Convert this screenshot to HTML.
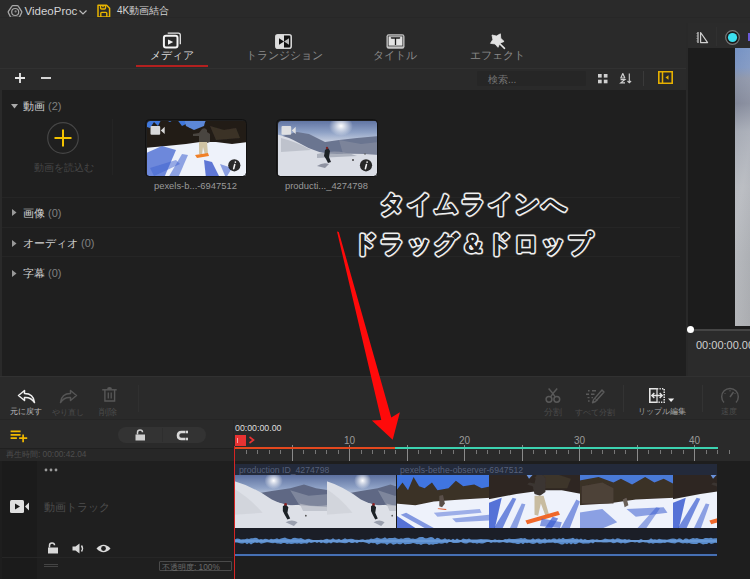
<!DOCTYPE html>
<html><head><meta charset="utf-8">
<style>
*{margin:0;padding:0;box-sizing:border-box}
html,body{width:750px;height:579px;overflow:hidden;background:#2a2a2a;font-family:"Liberation Sans",sans-serif;color:#ddd}
.a{position:absolute}
.t{position:absolute;white-space:nowrap;line-height:1}
svg{position:absolute;overflow:visible}
/* snowboard forest frame */
.fb{position:absolute;overflow:hidden;
background:
 radial-gradient(ellipse 30% 20% at 45% 72%, rgba(60,90,210,.9), rgba(60,90,210,0) 100%),
 linear-gradient(180deg,#4a6fc8 0%,#3a3a30 8%,#2e2a22 35%,#6a6a70 42%,#e8ecf8 55%,#c8d4f4 70%,#4e70d8 88%,#3a5ad0 100%)}
.fs{position:absolute;overflow:hidden;
background:
 radial-gradient(ellipse 14% 22% at 50% 8%, rgba(255,255,255,.95), rgba(255,255,255,0) 100%),
 linear-gradient(180deg,#8ea2c6 0%,#aab8d4 20%,#8a98b4 32%,#d6dce8 45%,#eef0f6 65%,#dfe3ec 85%,#c6ccd8 100%)}
</style></head><body>

<svg style="left:0;top:0;width:0;height:0" width="0" height="0">
 <defs>
  <radialGradient id="sun" cx="0.5" cy="0.5" r="0.5"><stop offset="0" stop-color="#fff" stop-opacity="1"/><stop offset="1" stop-color="#fff" stop-opacity="0"/></radialGradient>
  <linearGradient id="skyA" x1="0" y1="0" x2="0" y2="1"><stop offset="0" stop-color="#55699a"/><stop offset=".6" stop-color="#8fa2c6"/><stop offset="1" stop-color="#c8d0e0"/></linearGradient>
  <linearGradient id="snowA" x1="0" y1="0" x2="0" y2="1"><stop offset="0" stop-color="#e4e7ee"/><stop offset="1" stop-color="#cfd3dc"/></linearGradient>
  <symbol id="skier" viewBox="0 0 100 56" preserveAspectRatio="none">
   <g filter="url(#soft)">
   <rect x="-2" y="-2" width="104" height="60" fill="#dfe2e8"/>
   <rect x="-2" y="-2" width="104" height="26" fill="url(#skyA)"/>
   <ellipse cx="42" cy="6" rx="10" ry="9" fill="url(#sun)"/>
   <path d="M20 20 L40 17 L60 14 L75 10 L88 14 L102 16 V30 L60 32 L30 26 Z" fill="#5e6884"/>
   <path d="M60 16 L80 22 L102 20 V34 L70 32 Z" fill="#7e869c"/>
   <path d="M-2 6 Q20 12 40 26 Q60 36 102 36 V58 H-2 Z" fill="#dde0e7"/>
   <path d="M-2 14 Q16 24 30 40 L-2 42 Z" fill="#cfd2da" opacity=".8"/>
   <path d="M70 30 Q85 34 100 32 V38 H74 Z" fill="#b6bac4" opacity=".7"/>
   <path d="M52 33 L55 31 L58 34 L57 40 L60 46 L57 47 L54 42 L52 38 Z" fill="#1e2028"/>
   <circle cx="55" cy="31" r="1.5" fill="#8a2020"/>
   <path d="M55 50 Q62 46 68 50 L64 54 Z" fill="#8a90a0" opacity=".8"/>
   <circle cx="77" cy="43" r="0.9" fill="#444"/>
   </g>
  </symbol>
  <filter id="soft" x="-5%" y="-5%" width="110%" height="110%"><feGaussianBlur stdDeviation="0.7"/></filter>
  <linearGradient id="snowB" x1="0" y1="0" x2="0" y2="1"><stop offset="0" stop-color="#f2f4fa"/><stop offset="1" stop-color="#dfe6f8"/></linearGradient>
  <symbol id="board" viewBox="0 0 100 56" preserveAspectRatio="none">
   <g filter="url(#soft)">
   <rect x="-2" y="-2" width="104" height="60" fill="#eef2fa"/>
   <rect x="-2" y="-2" width="104" height="12" fill="#3f78dc"/>
   <path d="M-2 28 V6 L4 8 L8 2 L12 6 L16 -2 L24 2 L30 -2 L36 6 L40 4 L44 8 L50 2 L56 6 L62 -2 H102 V22 L86 24 L70 22 L54 22 L40 24 L20 26 Z" fill="#241e18"/>
   <path d="M38 -2 L60 -2 L58 6 L48 10 L40 6 Z" fill="#5c88d8"/>
   <path d="M64 6 L78 10 L90 8 L94 18 L70 20 Z" fill="#3a3228"/>
   <path d="M-2 34 L16 26 L30 30 L18 58 H-2 Z" fill="#4264d0" opacity=".75"/>
   <path d="M22 58 L36 34 L42 35 L32 58 Z" fill="#3e60d0" opacity=".55"/>
   <path d="M4 48 L30 40 L34 44 L8 56 Z" fill="#3e60d0" opacity=".5"/>
   <path d="M58 40 L66 42 L74 58 H60 Z" fill="#3a58cc" opacity=".8"/>
   <path d="M74 44 L86 48 L80 58 Z" fill="#4a68d0" opacity=".6"/>
   <path d="M56 9 Q59 7 61 10 L61 12 L64 14 L64 22 L61 23 L53 22 L53 16 L47 16 L47 14 L53 13 Z" fill="#4a4440"/>
   <path d="M53 22 L61 22 L62 34 L59 35 L57 27 L56 35 L53 34 Z" fill="#d0c4a4"/>
   <path d="M49 35 L62 33 L63 36 L51 38 Z" fill="#f08028"/>
   </g>
  </symbol>
  <symbol id="board2" viewBox="0 0 100 56" preserveAspectRatio="none">
   <g filter="url(#soft)">
   <rect x="-2" y="-2" width="104" height="60" fill="#eef2fb"/>
   <rect x="-2" y="-2" width="104" height="8" fill="#6a92dc"/>
   <path d="M-2 26 V-2 H40 L44 4 L50 -2 H102 V20 L80 16 L60 16 L30 20 Z" fill="#2e2822"/>
   <path d="M50 2 L70 -2 L90 4 L86 14 L60 14 Z" fill="#3c342c"/>
   <path d="M-2 30 L14 24 L6 58 H-2 Z" fill="#3a5cd0" opacity=".85"/>
   <path d="M4 58 L26 24 L30 25 L14 58 Z" fill="#3a5cd0" opacity=".7"/>
   <path d="M22 58 L36 30 L40 31 L30 58 Z" fill="#3a5cd0" opacity=".55"/>
   <path d="M60 58 L70 44 L76 46 L68 58 Z" fill="#3a5cd0" opacity=".7"/>
   <path d="M78 58 L96 26 L100 28 L88 58 Z" fill="#3a5cd0" opacity=".6"/>
   <path d="M52 0 Q58 -2 62 3 L62 18 L56 22 L50 20 L48 12 L42 10 L44 8 L50 9 Z" fill="#3a3430"/>
   <path d="M50 22 L60 22 L66 42 L62 43 L57 30 L54 43 L50 42 Z" fill="#c8bca0"/>
   <path d="M40 48 L76 38 L78 42 L42 52 Z" fill="#f0682a"/>
   <path d="M58 46 L80 50 L78 56 L56 54 Z" fill="#3a5cd0" opacity=".6"/>
   </g>
  </symbol>
  <symbol id="wide" viewBox="0 0 100 56" preserveAspectRatio="none">
   <g filter="url(#soft)">
   <rect x="-2" y="-2" width="104" height="60" fill="#eef2fb"/>
   <rect x="-2" y="-2" width="104" height="22" fill="#3f74e0"/>
   <path d="M-2 30 V18 L6 8 L12 16 L18 2 L24 12 L30 14 L38 8 L44 16 L56 14 L64 6 L72 12 L84 10 L92 14 L102 12 V24 L70 26 L40 28 L20 32 Z" fill="#3a3026"/>
   <path d="M-2 42 L20 56 H-2 Z" fill="#3a5cd0" opacity=".85"/>
   <path d="M10 40 L40 56 H30 L4 42 Z" fill="#3a5cd0" opacity=".6"/>
   <path d="M40 40 L90 36 L92 40 L44 44 Z" fill="#3a5cd0" opacity=".45"/>
   <path d="M60 46 L100 42 V48 L64 50 Z" fill="#3a5cd0" opacity=".5"/>
   <path d="M46 22 L50 21 L52 30 L49 34 L46 33 Z" fill="#5a5048"/>
   <path d="M45 35 L54 36 L53 37 L44 36 Z" fill="#e05a30"/>
   </g>
  </symbol>
  <symbol id="house" viewBox="0 0 100 56" preserveAspectRatio="none">
   <g filter="url(#soft)">
   <rect x="-2" y="-2" width="104" height="60" fill="#eef2fb"/>
   <rect x="-2" y="-2" width="104" height="20" fill="#4a7ad8"/>
   <path d="M-2 32 V6 L20 2 L36 8 L44 4 L56 10 L70 2 L80 8 L90 4 L102 10 V24 L60 26 L30 30 Z" fill="#3a3028"/>
   <path d="M2 12 L24 8 L36 14 V30 H2 Z" fill="#4e4238"/>
   <path d="M-2 40 L24 36 L40 50 L20 58 H-2 Z" fill="#3a5cd0" opacity=".55"/>
   <path d="M50 36 L90 34 L94 40 L60 44 Z" fill="#3a5cd0" opacity=".55"/>
   <path d="M60 58 L82 34 L86 35 L70 58 Z" fill="#3a5cd0" opacity=".5"/>
   <path d="M46 26 L50 24 L52 32 L48 34 Z" fill="#6a6058"/>
   </g>
  </symbol>
  <symbol id="skier2" viewBox="0 0 100 56" preserveAspectRatio="none">
   <g filter="url(#soft)">
   <rect x="-2" y="-2" width="104" height="60" fill="#dcdfe6"/>
   <rect x="-2" y="-2" width="104" height="24" fill="url(#skyA)"/>
   <ellipse cx="64" cy="6" rx="12" ry="10" fill="url(#sun)"/>
   <path d="M-2 18 L20 12 L32 14 L48 22 L62 20 L80 18 L102 16 V34 H-2 Z" fill="#6a7490"/>
   <path d="M62 20 L84 24 L102 22 V36 L66 34 Z" fill="#7c849a"/>
   <path d="M-2 14 Q10 16 24 24 Q40 34 60 34 Q80 33 102 35 V58 H-2 Z" fill="#dadde5"/>
   <path d="M4 18 Q20 22 34 30 L4 32 Z" fill="#b6bbc6" opacity=".8"/>
   <path d="M40 34 Q60 28 80 36 L40 38 Z" fill="#9aa0ae" opacity=".7"/>
   <path d="M48 30 L51 28 L53 31 L52 37 L54 42 L51 43 L49 39 L47 36 Z" fill="#1e2028"/>
   <circle cx="50" cy="28" r="1.2" fill="#7a2424"/>
   <path d="M40 46 Q46 42 52 44 L48 48 Z" fill="#7a8090" opacity=".8"/>
   <circle cx="76" cy="40" r="1" fill="#444"/>
   <circle cx="88" cy="34" r="0.8" fill="#555"/>
   </g>
  </symbol>
 </defs>
</svg>
<!-- ================= TITLE BAR ================= -->
<svg style="left:7px;top:4px" width="16" height="15" viewBox="0 0 16 15">
 <path d="M6 1.6 H10.2 Q11 1.6 11.4 2.3 L14.6 7.3 Q15 8 14.6 8.7 L12.6 12.7 Q12.2 13.4 11.4 13.4 H4.6 Q3.8 13.4 3.4 12.7 L1.4 8.7 Q1 8 1.4 7.3 L4.8 2.3 Q5.2 1.6 6 1.6 Z" fill="none" stroke="#a8a8a8" stroke-width="1.3" stroke-linejoin="round"/>
 <circle cx="8.2" cy="8" r="3.5" fill="none" stroke="#a8a8a8" stroke-width="1.2"/>
 <circle cx="8.6" cy="7.4" r="1.1" fill="#888"/>
</svg>
<div class="t" style="left:24.5px;top:6px;font-size:11.5px;color:#d4d4d4">VideoProc</div>
<svg style="left:79px;top:10px" width="8" height="5" viewBox="0 0 8 5"><path d="M0.5 0.5 L4 4 L7.5 0.5" fill="none" stroke="#bbb" stroke-width="1.2"/></svg>
<svg style="left:97px;top:4px" width="14" height="14" viewBox="0 0 14 14">
 <path d="M1 1.2 H9.6 L12.6 4.2 V13 H1 Z" fill="none" stroke="#e8b400" stroke-width="1.5" stroke-linejoin="round"/>
 <path d="M3.6 1.2 V3.9 Q3.6 5 4.7 5 H7.4 Q8.5 5 8.5 3.9 V1.2" fill="none" stroke="#e8b400" stroke-width="1.4"/>
 <circle cx="6" cy="2.6" r="0.8" fill="#e8b400"/>
 <path d="M3.8 13 V9.3 Q3.8 8.4 4.7 8.4 H8.9 Q9.8 8.4 9.8 9.3 V13" fill="none" stroke="#e8b400" stroke-width="1.4"/>
</svg>
<div class="t" style="left:117px;top:6px;font-size:10px;color:#d4d4d4">4K動画結合</div>

<div class="a" style="left:0;top:17px;width:750px;height:1px;background:#272727"></div>
<!-- ================= TABS ================= -->
<!-- media icon -->
<svg style="left:162px;top:31px" width="20" height="18" viewBox="0 0 20 18">
 <path d="M5.7 2.2 H16.3 Q18.3 2.2 18.3 4.2 V13.3" fill="none" stroke="#e4e4e4" stroke-width="1.3"/>
 <rect x="1.9" y="4.8" width="13.6" height="11.7" rx="2" fill="#2a2a2a" stroke="#f4f4f4" stroke-width="2"/>
 <path d="M6 8.4 L11.2 11 L6 13.7 Z" fill="#f4f4f4"/>
</svg>
<div class="t" style="left:122px;width:100px;text-align:center;top:50px;font-size:10.5px;color:#dcdcdc">メディア</div>
<div class="a" style="left:136px;top:65px;width:72px;height:2px;background:#b3201f"></div>
<!-- transition icon -->
<svg style="left:275px;top:34px" width="17" height="15" viewBox="0 0 17 15">
 <rect x="0.8" y="0.8" width="15.4" height="13.4" rx="2" fill="#111" stroke="#d4d4d4" stroke-width="1.6"/>
 <rect x="1" y="1" width="8" height="13" fill="#dcdcdc"/>
 <path d="M4 4.2 L9 7.5 L4 10.8 Z" fill="#111"/>
 <path d="M14 4.2 L9 7.5 L14 10.8 Z" fill="#bbb"/>
</svg>
<div class="t" style="left:234px;width:100px;text-align:center;top:50px;font-size:10.5px;color:#8a8a8a">トランジション</div>
<!-- title icon -->
<svg style="left:386px;top:34px" width="19" height="15" viewBox="0 0 19 15">
 <rect x="0.5" y="0.3" width="18" height="14.4" rx="2.2" fill="#c4c4c4"/>
 <rect x="2.2" y="2" width="14.6" height="10" fill="#e2e2e2" stroke="#2a2a2a" stroke-width="0.7"/>
 <path d="M5.5 4.6 V4 H13.5 V4.6 M9.5 4 V11" fill="none" stroke="#1a1a1a" stroke-width="1.3"/>
</svg>
<div class="t" style="left:345px;width:100px;text-align:center;top:50px;font-size:10.5px;color:#8a8a8a">タイトル</div>
<!-- effect icon -->
<svg style="left:489px;top:33px" width="17" height="17" viewBox="0 0 17 17">
 <path d="M10 10 L15.5 15.3" stroke="#e6e6e6" stroke-width="1.6" stroke-linecap="round"/>
 <path d="M11.38 0.84 L11.77 5.36 L15.09 8.45 L10.92 10.22 L9.00 14.33 L6.03 10.91 L1.53 10.36 L3.86 6.47 L3.00 2.02 L7.42 3.04 Z" fill="#e2e2e2" stroke="#e2e2e2" stroke-width="0.8" stroke-linejoin="round"/>
</svg>
<div class="t" style="left:447px;width:100px;text-align:center;top:50px;font-size:10.5px;color:#8a8a8a">エフェクト</div>
<div class="a" style="left:0;top:68px;width:686px;height:1px;background:#313131"></div>

<!-- +/- row -->
<svg style="left:14px;top:72px" width="12" height="12" viewBox="0 0 12 12"><path d="M6 1 V11 M1 6 H11" stroke="#e8e8e8" stroke-width="1.8"/></svg>
<svg style="left:40px;top:72px" width="12" height="12" viewBox="0 0 12 12"><path d="M1 6 H11" stroke="#e8e8e8" stroke-width="1.8"/></svg>
<div class="a" style="left:477px;top:71px;width:109px;height:15px;background:#262626;border-radius:2px"></div>
<div class="t" style="left:488px;top:74.5px;font-size:10px;color:#777">検索...</div>
<svg style="left:597.7px;top:73.8px" width="9.5" height="9.3" viewBox="0 0 9.5 9.3">
 <rect x="0" y="0" width="3.7" height="3.6" fill="#d0d0d0"/><rect x="5.8" y="0" width="3.7" height="3.6" fill="#d0d0d0"/>
 <rect x="0" y="5.7" width="3.7" height="3.6" fill="#d0d0d0"/><rect x="5.8" y="5.7" width="3.7" height="3.6" fill="#d0d0d0"/>
</svg>
<svg style="left:620px;top:73px" width="12" height="10.5" viewBox="0 0 12 10.5">
 <path d="M0.8 5 L2.8 0.6 L4.8 5 Z" fill="none" stroke="#cfcfcf" stroke-width="1.2" stroke-linejoin="round"/>
 <path d="M0.6 6.6 H4.8 L0.8 9.8 H5" fill="none" stroke="#cfcfcf" stroke-width="1.2"/>
 <path d="M9.3 0.5 V9.8 M7.5 8 L9.3 9.8 L11.1 8" fill="none" stroke="#cfcfcf" stroke-width="1.1"/>
</svg>
<div class="a" style="left:643px;top:71px;width:1px;height:15px;background:#3a3a3a"></div>
<svg style="left:658px;top:71px" width="15" height="13" viewBox="0 0 15 14" preserveAspectRatio="none">
 <rect x="0.8" y="0.8" width="13.4" height="12.4" fill="none" stroke="#e6b000" stroke-width="1.6"/>
 <path d="M4.5 1 V13" stroke="#e6b000" stroke-width="1.5"/>
 <path d="M10.5 4.5 L7.5 7 L10.5 9.5 Z" fill="#e6b000"/>
</svg>

<!-- ================= MEDIA LIST ================= -->
<div class="a" style="left:2px;top:90px;width:684px;height:286px;background:#1f1f1f"></div>
<div class="a" style="left:2px;top:197px;width:678px;height:1px;background:#252525"></div>
<div class="a" style="left:2px;top:227px;width:678px;height:1px;background:#252525"></div>
<div class="a" style="left:2px;top:256px;width:678px;height:1px;background:#252525"></div>
<svg style="left:11px;top:104px" width="7" height="5" viewBox="0 0 7 5"><path d="M0 0 H7 L3.5 4.5 Z" fill="#aaa"/></svg>
<div class="t" style="left:23px;top:101px;font-size:11px;color:#d0d0d0">動画 <span style="color:#808080">(2)</span></div>
<svg style="left:12px;top:209px" width="5" height="7" viewBox="0 0 5 7"><path d="M0 0 V7 L4.5 3.5 Z" fill="#999"/></svg>
<div class="t" style="left:23px;top:208px;font-size:11px;color:#d0d0d0">画像 <span style="color:#808080">(0)</span></div>
<svg style="left:12px;top:240px" width="5" height="7" viewBox="0 0 5 7"><path d="M0 0 V7 L4.5 3.5 Z" fill="#999"/></svg>
<div class="t" style="left:23px;top:238px;font-size:11px;color:#d0d0d0">オーディオ <span style="color:#808080">(0)</span></div>
<svg style="left:12px;top:270px" width="5" height="7" viewBox="0 0 5 7"><path d="M0 0 V7 L4.5 3.5 Z" fill="#999"/></svg>
<div class="t" style="left:23px;top:268px;font-size:11px;color:#d0d0d0">字幕 <span style="color:#808080">(0)</span></div>

<svg style="left:47px;top:122px" width="32" height="32" viewBox="0 0 32 32">
 <circle cx="16" cy="16" r="15.3" fill="none" stroke="#464646" stroke-width="1.2"/>
 <path d="M16 7.5 V24.5 M7.5 16 H24.5" stroke="#f2c200" stroke-width="2"/>
</svg>
<div class="t" style="left:33.5px;top:162.5px;font-size:9.8px;color:#474747">動画を読込む</div>
<div class="a" style="left:112px;top:119px;width:1px;height:56px;background:#242424"></div>

<!-- thumb 1 -->
<svg style="left:145px;top:119px" width="102" height="58" viewBox="0 0 102 58">
 <clipPath id="c1"><rect x="1" y="1" width="100" height="56" rx="3.5"/></clipPath>
 <use href="#board" x="1" y="1" width="100" height="56" clip-path="url(#c1)"/>
 <rect x="0.5" y="0.5" width="101" height="57" rx="4" fill="none" stroke="#111" stroke-width="1"/>
 <rect x="5.5" y="7" width="9.7" height="8.8" rx="1" fill="#e4e4e4" opacity=".95"/>
 <path d="M15.8 11.4 L19.7 7.8 V15 Z" fill="#e4e4e4" opacity=".95"/>
 <circle cx="89.3" cy="46.3" r="6.1" fill="#1e1e1e" opacity=".95"/>
 <path d="M90.4 43 V43.2 M89.7 45.6 L88.7 49.6" stroke="#f4f4f4" stroke-width="1.6" stroke-linecap="round"/>
</svg>
<!-- thumb 2 -->
<svg style="left:276px;top:119px" width="102" height="58" viewBox="0 0 102 58">
 <clipPath id="c2"><rect x="1" y="1" width="100" height="56" rx="3.5"/></clipPath>
 <use href="#skier2" x="1" y="1" width="100" height="56" clip-path="url(#c2)"/>
 <rect x="0.5" y="0.5" width="101" height="57" rx="4" fill="none" stroke="#111" stroke-width="1"/>
 <rect x="5.5" y="7" width="9.7" height="8.8" rx="1" fill="#e4e4e4" opacity=".95"/>
 <path d="M15.8 11.4 L19.7 7.8 V15 Z" fill="#e4e4e4" opacity=".95"/>
 <circle cx="90" cy="46.3" r="6.1" fill="#1e1e1e" opacity=".95"/>
 <path d="M91.1 43 V43.2 M90.4 45.6 L89.4 49.6" stroke="#f4f4f4" stroke-width="1.6" stroke-linecap="round"/>
</svg>
<div class="t" style="left:154px;top:181px;font-size:9.4px;color:#9a9a9a">pexels-b...-6947512</div>
<div class="t" style="left:285px;top:181px;font-size:9.4px;color:#9a9a9a">producti..._4274798</div>

<!-- ================= PREVIEW ================= -->
<div class="a" style="left:686px;top:23px;width:64px;height:353px;background:#2b2b2b"></div>
<div class="a" style="left:686px;top:23px;width:2px;height:353px;background:#292929"></div>
<svg style="left:696px;top:31px" width="13" height="13" viewBox="0 0 13 13">
 <path d="M2 1 V12" stroke="#cfcfcf" stroke-width="1.2"/>
 <path d="M0.5 2.5 H2 M0.5 5 H2 M0.5 7.5 H2 M0.5 10 H2" stroke="#aaa" stroke-width="0.8"/>
 <path d="M4.6 1.5 L11.6 11.6 H4.6 Z" fill="none" stroke="#d0d0d0" stroke-width="1.2" stroke-linejoin="round"/>
</svg>
<div class="a" style="left:716px;top:27px;width:1px;height:19px;background:#303030"></div>
<svg style="left:724px;top:29px" width="17" height="17" viewBox="0 0 17 17">
 <circle cx="8.5" cy="8.5" r="6.8" fill="#1a1a1a" stroke="#777" stroke-width="1.2"/>
 <circle cx="8.5" cy="8.5" r="4.6" fill="#3ce0f0"/>
</svg>
<div class="a" style="left:748px;top:33px;width:2px;height:8px;background:#6a5ad8"></div>
<div class="a" style="left:688px;top:48px;width:62px;height:282px;background:#1c1c1c"></div>
<div class="a" style="left:735px;top:48px;width:15px;height:278px;background:linear-gradient(180deg,#7592c4 0%,#7c94c0 7%,#8a92a6 11%,#7e8496 20%,#a0a5b0 30%,#b0b3b9 50%,#aeb1b6 75%,#b4b6ba 100%)"></div>
<div class="a" style="left:735px;top:48px;width:15px;height:278px;background:linear-gradient(100deg,rgba(255,255,255,0) 0,rgba(255,255,255,.15) 50%,rgba(0,0,0,.05) 100%)"></div>
<div class="a" style="left:690px;top:329px;width:60px;height:2px;background:#454545"></div>
<div class="a" style="left:687px;top:326px;width:7px;height:7px;border-radius:50%;background:#fff"></div>
<div class="t" style="left:696px;top:340px;font-size:11px;color:#cfcfcf">00:00:00.00</div>
<!-- ================= TOOLBAR ================= -->
<div class="a" style="left:0;top:376px;width:750px;height:44px;background:#2a2a2a"></div>
<div class="a" style="left:0;top:376px;width:750px;height:1px;background:#313131"></div>
<div class="a" style="left:0;top:419px;width:750px;height:1px;background:#252525"></div>
<!-- undo -->
<svg style="left:17px;top:388.5px" width="19" height="15" viewBox="0 0 19 15">
 <path d="M7.5 1.5 L1.5 6.5 L7.5 11.5 V8.5 Q14 8 17.5 13.5 Q16.5 4.5 7.5 4.5 Z" fill="none" stroke="#efefef" stroke-width="1.5" stroke-linejoin="round"/>
</svg>
<div class="t" style="left:-14.5px;width:80px;text-align:center;top:408px;font-size:8px;color:#bdbdbd">元に戻す</div>
<svg style="left:58.5px;top:388.5px" width="19" height="15" viewBox="0 0 19 15">
 <path d="M11.5 1.5 L17.5 6.5 L11.5 11.5 V8.5 Q5 8 1.5 13.5 Q2.5 4.5 11.5 4.5 Z" fill="none" stroke="#555" stroke-width="1.5" stroke-linejoin="round"/>
</svg>
<div class="t" style="left:28.400000000000006px;width:80px;text-align:center;top:408px;font-size:8.3px;color:#4c4c4c">やり直し</div>
<svg style="left:101px;top:385px" width="17" height="18" viewBox="0 0 17 18">
 <path d="M1.2 4.8 H15.7" stroke="#585858" stroke-width="1.4"/>
 <path d="M6 4.4 Q6 2 8.5 2 Q11 2 11 4.4 Z" fill="#585858"/>
 <path d="M3.9 5 V16 H13.6 V5" fill="none" stroke="#585858" stroke-width="1.4"/>
 <path d="M7.3 7.5 V13.5 M10.2 7.5 V13.5" stroke="#585858" stroke-width="1.3"/>
</svg>
<div class="t" style="left:68.3px;width:80px;text-align:center;top:408px;font-size:8.7px;color:#4c4c4c">削除</div>
<div class="a" style="left:138px;top:385px;width:1px;height:27px;background:#303030"></div>
<!-- scissors -->
<svg style="left:544px;top:387px" width="18" height="17" viewBox="0 0 18 17">
 <circle cx="5" cy="12.3" r="2.9" fill="none" stroke="#595959" stroke-width="1.5"/>
 <circle cx="12.8" cy="12.3" r="2.9" fill="none" stroke="#595959" stroke-width="1.5"/>
 <path d="M6.6 9.8 Q9 6 13.2 1.5 M11.2 9.8 Q8.8 6 4.6 1.5" fill="none" stroke="#595959" stroke-width="1.5"/>
</svg>
<div class="t" style="left:512.5px;width:80px;text-align:center;top:408px;font-size:8.5px;color:#4c4c4c">分割</div>
<svg style="left:585px;top:389px" width="20" height="15" viewBox="0 0 20 15">
 <path d="M3 1.8 H4.6 M7 1.8 H11 M1 5.2 H4 M6 5.2 H9.5 M2.5 8.6 H4.5 M6.5 8.6 H8 M3 12 H4.6" stroke="#5a5a5a" stroke-width="1.4"/>
 <path d="M17 1 L19 3 L10.5 12.5 L7.5 13.8 L8.6 10.6 Z" fill="none" stroke="#5a5a5a" stroke-width="1.4" stroke-linejoin="round"/>
 <path d="M10 9.5 L12.5 11.5" stroke="#5a5a5a" stroke-width="1"/>
</svg>
<div class="t" style="left:555.3px;width:80px;text-align:center;top:408px;font-size:8.3px;color:#4c4c4c">すべて分割</div>
<div class="a" style="left:623px;top:385px;width:1px;height:27px;background:#333"></div>
<!-- ripple -->
<svg style="left:648px;top:387px" width="28" height="17" viewBox="0 0 28 17">
 <path d="M9 1.8 H1.8 V15.2 H9" fill="none" stroke="#e6e6e6" stroke-width="1.6"/>
 <path d="M9 1.8 H16.2 V15.2 H9" fill="none" stroke="#e6e6e6" stroke-width="1.5" stroke-dasharray="1.3 1.2"/>
 <path d="M9 1 V16" stroke="#d8d8d8" stroke-width="1.3"/>
 <path d="M3.8 8.5 H14.2 M6.3 6 L3.8 8.5 L6.3 11 M11.7 6 L14.2 8.5 L11.7 11" fill="none" stroke="#e6e6e6" stroke-width="1.4"/>
 <path d="M20 11.6 H26.2 L23.1 15 Z" fill="#f0f0f0"/>
</svg>
<div class="t" style="left:621.7px;width:80px;text-align:center;top:408px;font-size:8px;color:#a8a8a8">リップル編集</div>
<div class="a" style="left:702px;top:385px;width:1px;height:27px;background:#333"></div>
<svg style="left:720px;top:387px" width="20" height="17" viewBox="0 0 20 17">
 <path d="M4 15.5 A8.3 8.3 0 1 1 16 15.5" fill="none" stroke="#575757" stroke-width="1.4"/>
 <path d="M10 10 L13.5 5" stroke="#575757" stroke-width="1.5"/>
 <path d="M10 3 V4.5 M4.5 6 L5.5 7 M15.5 6 L14.5 7" stroke="#575757" stroke-width="1"/>
</svg>
<div class="t" style="left:689.4px;width:80px;text-align:center;top:408px;font-size:8px;color:#4c4c4c">速度</div>

<!-- ================= TIMELINE HEADER ================= -->
<svg style="left:10px;top:430px" width="18" height="14" viewBox="0 0 18 14">
 <path d="M0.6 1.3 H10.6 M0.6 4.8 H10.6 M0.6 8.1 H6.9" stroke="#f0b800" stroke-width="1.7"/>
 <path d="M13.1 4.4 V12.3 M9.1 8.1 H17.2" stroke="#f0b800" stroke-width="1.7"/>
</svg>
<div class="a" style="left:118px;top:427px;width:88px;height:16px;background:#333;border-radius:8px"></div>
<div class="a" style="left:162px;top:428px;width:1px;height:14px;background:#2e2e2e"></div>
<svg style="left:135px;top:429px" width="11" height="12" viewBox="0 0 11 12">
 <path d="M2.5 5.5 V3.5 Q2.5 1 5 1 Q7.5 1 7.5 3.2" fill="none" stroke="#cfcfcf" stroke-width="1.5"/>
 <rect x="0.5" y="5.5" width="9.5" height="6" fill="#cfcfcf"/>
</svg>
<svg style="left:176px;top:430px" width="13" height="11" viewBox="0 0 13 11">
 <path d="M9 2 H5.5 Q2 2 2 5.5 Q2 9 5.5 9 H9" fill="none" stroke="#d8d8d8" stroke-width="2.6"/>
 <rect x="9.5" y="0.7" width="2.5" height="2.6" fill="#d8d8d8"/><rect x="9.5" y="7.7" width="2.5" height="2.6" fill="#d8d8d8"/>
</svg>
<div class="a" style="left:0;top:448px;width:233px;height:1px;background:#202020"></div>
<div class="a" style="left:0;top:449px;width:233px;height:12px;background:#272727"></div>
<div class="t" style="left:6px;top:449.5px;font-size:8.3px;color:#4e4e4e">再生時間: 00:00:42.04</div>
<div class="a" style="left:233px;top:420px;width:1px;height:41px;background:#262626"></div>

<div class="t" style="left:235px;top:423.5px;font-size:8.8px;color:#dedede">00:00:00.00</div>
<div class="a" style="left:235px;top:435px;width:11px;height:11px;background:#e83232"></div>
<div class="a" style="left:237px;top:438px;width:1px;height:5px;background:#f8a0a0"></div>
<svg style="left:248px;top:436px" width="8" height="8" viewBox="0 0 8 8"><path d="M1.5 1 L5.5 4 L1.5 7" fill="none" stroke="#e83232" stroke-width="1.6"/></svg>
<div class="a" style="left:234.0px;top:449px;width:1px;height:12px;background:#8a8a8a"></div>
<div class="a" style="left:245.5px;top:450px;width:1px;height:4px;background:#777"></div>
<div class="a" style="left:257.0px;top:450px;width:1px;height:4px;background:#777"></div>
<div class="a" style="left:268.5px;top:450px;width:1px;height:4px;background:#777"></div>
<div class="a" style="left:280.0px;top:450px;width:1px;height:4px;background:#777"></div>
<div class="a" style="left:291.5px;top:445px;width:1px;height:16px;background:#8a8a8a"></div>
<div class="a" style="left:303.0px;top:450px;width:1px;height:4px;background:#777"></div>
<div class="a" style="left:314.5px;top:450px;width:1px;height:4px;background:#777"></div>
<div class="a" style="left:326.0px;top:450px;width:1px;height:4px;background:#777"></div>
<div class="a" style="left:337.5px;top:450px;width:1px;height:4px;background:#777"></div>
<div class="a" style="left:349.0px;top:445px;width:1px;height:16px;background:#8a8a8a"></div>
<div class="a" style="left:360.5px;top:450px;width:1px;height:4px;background:#777"></div>
<div class="a" style="left:372.0px;top:450px;width:1px;height:4px;background:#777"></div>
<div class="a" style="left:383.5px;top:450px;width:1px;height:4px;background:#777"></div>
<div class="a" style="left:395.0px;top:450px;width:1px;height:4px;background:#777"></div>
<div class="a" style="left:406.5px;top:445px;width:1px;height:16px;background:#8a8a8a"></div>
<div class="a" style="left:418.0px;top:450px;width:1px;height:4px;background:#777"></div>
<div class="a" style="left:429.5px;top:450px;width:1px;height:4px;background:#777"></div>
<div class="a" style="left:441.0px;top:450px;width:1px;height:4px;background:#777"></div>
<div class="a" style="left:452.5px;top:450px;width:1px;height:4px;background:#777"></div>
<div class="a" style="left:464.0px;top:445px;width:1px;height:16px;background:#8a8a8a"></div>
<div class="a" style="left:475.5px;top:450px;width:1px;height:4px;background:#777"></div>
<div class="a" style="left:487.0px;top:450px;width:1px;height:4px;background:#777"></div>
<div class="a" style="left:498.5px;top:450px;width:1px;height:4px;background:#777"></div>
<div class="a" style="left:510.0px;top:450px;width:1px;height:4px;background:#777"></div>
<div class="a" style="left:521.5px;top:445px;width:1px;height:16px;background:#8a8a8a"></div>
<div class="a" style="left:533.0px;top:450px;width:1px;height:4px;background:#777"></div>
<div class="a" style="left:544.5px;top:450px;width:1px;height:4px;background:#777"></div>
<div class="a" style="left:556.0px;top:450px;width:1px;height:4px;background:#777"></div>
<div class="a" style="left:567.5px;top:450px;width:1px;height:4px;background:#777"></div>
<div class="a" style="left:579.0px;top:445px;width:1px;height:16px;background:#8a8a8a"></div>
<div class="a" style="left:590.5px;top:450px;width:1px;height:4px;background:#777"></div>
<div class="a" style="left:602.0px;top:450px;width:1px;height:4px;background:#777"></div>
<div class="a" style="left:613.5px;top:450px;width:1px;height:4px;background:#777"></div>
<div class="a" style="left:625.0px;top:450px;width:1px;height:4px;background:#777"></div>
<div class="a" style="left:636.5px;top:445px;width:1px;height:16px;background:#8a8a8a"></div>
<div class="a" style="left:648.0px;top:450px;width:1px;height:4px;background:#777"></div>
<div class="a" style="left:659.5px;top:450px;width:1px;height:4px;background:#777"></div>
<div class="a" style="left:671.0px;top:450px;width:1px;height:4px;background:#777"></div>
<div class="a" style="left:682.5px;top:450px;width:1px;height:4px;background:#777"></div>
<div class="a" style="left:694.0px;top:445px;width:1px;height:16px;background:#8a8a8a"></div>
<div class="a" style="left:705.5px;top:450px;width:1px;height:4px;background:#777"></div>
<div class="a" style="left:717.0px;top:450px;width:1px;height:4px;background:#777"></div>
<div class="a" style="left:728.5px;top:450px;width:1px;height:4px;background:#777"></div>
<div class="t" style="left:329.5px;width:40px;text-align:center;top:436px;font-size:10px;color:#9a9a9a">10</div>
<div class="t" style="left:444.5px;width:40px;text-align:center;top:436px;font-size:10px;color:#9a9a9a">20</div>
<div class="t" style="left:559.5px;width:40px;text-align:center;top:436px;font-size:10px;color:#9a9a9a">30</div>
<div class="t" style="left:674.5px;width:40px;text-align:center;top:436px;font-size:10px;color:#9a9a9a">40</div>
<div class="a" style="left:234px;top:447px;width:161px;height:2px;background:#e4481e"></div>
<div class="a" style="left:395px;top:447px;width:323px;height:2px;background:#3cd2b0"></div>

<!-- ================= TRACKS ================= -->
<div class="a" style="left:0;top:461px;width:750px;height:118px;background:#1e1e1e"></div>
<div class="a" style="left:2px;top:461px;width:35px;height:118px;background:#1b1b1b"></div>
<div class="a" style="left:37px;top:461px;width:196px;height:118px;background:#1f1f1f"></div>
<div class="a" style="left:2px;top:557px;width:231px;height:1px;background:#262626"></div>
<svg style="left:44px;top:468px" width="14" height="4" viewBox="0 0 14 4"><circle cx="2" cy="2" r="1.4" fill="#9a9a9a"/><circle cx="7" cy="2" r="1.4" fill="#9a9a9a"/><circle cx="12" cy="2" r="1.4" fill="#9a9a9a"/></svg>
<svg style="left:10px;top:500px" width="19" height="13" viewBox="0 0 19 13">
 <rect x="0" y="0" width="14" height="13" rx="1.5" fill="#e0e0e0"/>
 <path d="M5 3.5 L10 6.5 L5 9.5 Z" fill="#1b1b1b"/>
 <path d="M15 6.5 L19 2.5 V10.5 Z" fill="#e0e0e0"/>
</svg>
<div class="t" style="left:44px;top:501.5px;font-size:10.8px;color:#4e4e4e">動画トラック</div>
<svg style="left:47px;top:542px" width="12" height="12" viewBox="0 0 12 12">
 <path d="M2.5 5.5 V3.5 Q2.5 1 5 1 Q7.5 1 7.5 3.2" fill="none" stroke="#d8d8d8" stroke-width="1.5"/>
 <rect x="1" y="5.5" width="10" height="6" fill="#d8d8d8"/>
</svg>
<svg style="left:72px;top:543px" width="13" height="11" viewBox="0 0 13 11">
 <path d="M0.5 3.5 H3.5 L7.5 0.5 V10.5 L3.5 7.5 H0.5 Z" fill="#d8d8d8"/>
 <path d="M9.5 2.5 Q11.5 5.5 9.5 8.5" fill="none" stroke="#d8d8d8" stroke-width="1.4"/>
</svg>
<svg style="left:96px;top:544px" width="15" height="9" viewBox="0 0 15 9">
 <path d="M0.5 4.5 Q7.5 -3 14.5 4.5 Q7.5 12 0.5 4.5 Z" fill="#dcdcdc"/>
 <circle cx="7.5" cy="4.5" r="2.4" fill="#1f1f1f"/>
</svg>
<div class="a" style="left:44px;top:564px;width:14px;height:1px;background:#444"></div>
<div class="a" style="left:44px;top:566px;width:14px;height:1px;background:#444"></div>
<div class="a" style="left:159px;top:561px;width:73px;height:10px;border:1px solid #4a4a4a;border-radius:1px"></div>
<div class="t" style="left:162px;top:562.5px;font-size:8.3px;color:#6a6a6a">不透明度: 100%</div>

<!-- clips -->
<div class="a" style="left:235px;top:464px;width:482px;height:93px;background:#1b1e27"></div>
<div class="a" style="left:235px;top:464px;width:482px;height:12px;background:#232a3b"></div>
<div class="t" style="left:239px;top:466px;font-size:8.7px;color:#56607a">production ID_4274798</div>
<div class="t" style="left:400px;top:466px;font-size:8.7px;color:#56607a">pexels-bethe-observer-6947512</div>
<svg style="left:235px;top:475px" width="482" height="53" viewBox="0 0 482 53">
 <use href="#skier" x="0" y="0" width="92" height="53"/>
 <svg style="overflow:hidden" x="92" y="0" width="69" height="53" viewBox="0 0 75 53" preserveAspectRatio="none"><use href="#skier" x="0" y="0" width="92" height="53"/></svg>
 <rect x="161" y="0" width="1" height="53" fill="#1a1a1a"/>
 <use href="#wide" x="162" y="0" width="92" height="53"/>
 <use href="#board2" x="254" y="0" width="91" height="53"/>
 <use href="#house" x="345" y="0" width="93" height="53"/>
 <svg style="overflow:hidden" x="438" y="0" width="44" height="53" viewBox="0 0 44 53"><use href="#board2" x="0" y="0" width="91" height="53"/></svg>
</svg>
<svg style="left:235px;top:535px" width="482" height="12" viewBox="0 0 482 12"><path d="M0 4.3 L2 3.6 L4 3.7 L6 4.4 L8 4.3 L10 4.2 L12 3.5 L14 4.1 L16 3.2 L18 3.3 L20 2.7 L22 3.0 L24 4.4 L26 4.1 L28 4.5 L30 3.7 L32 3.9 L34 4.8 L36 3.7 L38 4.3 L40 4.0 L42 3.3 L44 4.2 L46 3.6 L48 3.1 L50 2.6 L52 3.5 L54 4.0 L56 4.2 L58 2.9 L60 2.7 L62 3.2 L64 3.5 L66 3.1 L68 3.9 L70 4.8 L72 3.9 L74 3.7 L76 4.6 L78 5.0 L80 5.0 L82 5.0 L84 5.0 L86 4.7 L88 5.0 L90 4.3 L92 3.7 L94 4.6 L96 4.4 L98 3.2 L100 4.6 L102 4.5 L104 3.8 L106 4.9 L108 4.3 L110 3.3 L112 4.2 L114 4.0 L116 3.7 L118 3.9 L120 4.8 L122 4.8 L124 4.9 L126 4.6 L128 4.3 L130 4.9 L132 4.6 L134 4.6 L136 3.4 L138 3.9 L140 3.6 L142 2.6 L144 3.2 L146 3.8 L148 3.2 L150 2.3 L152 3.8 L154 2.9 L156 2.9 L158 3.0 L160 2.5 L162 3.6 L164 3.9 L166 3.3 L168 3.7 L170 2.9 L172 2.8 L174 2.8 L176 3.8 L178 3.5 L180 4.0 L182 3.5 L184 2.2 L186 2.1 L188 2.0 L190 3.2 L192 3.2 L194 2.4 L196 2.1 L198 2.5 L200 4.2 L202 2.8 L204 3.2 L206 4.4 L208 4.2 L210 3.2 L212 4.4 L214 3.9 L216 5.0 L218 3.7 L220 5.0 L222 3.6 L224 4.7 L226 5.0 L228 3.4 L230 4.1 L232 4.2 L234 3.4 L236 4.4 L238 4.4 L240 4.4 L242 4.6 L244 4.3 L246 3.9 L248 4.3 L250 4.3 L252 4.3 L254 4.6 L256 5.0 L258 5.0 L260 4.3 L262 5.0 L264 4.7 L266 5.0 L268 5.0 L270 4.1 L272 4.3 L274 3.6 L276 4.0 L278 4.0 L280 4.0 L282 3.8 L284 3.4 L286 2.9 L288 3.5 L290 3.0 L292 4.3 L294 4.5 L296 4.5 L298 3.3 L300 4.5 L302 3.7 L304 3.4 L306 4.6 L308 4.3 L310 3.2 L312 4.7 L314 3.9 L316 4.4 L318 3.4 L320 3.6 L322 4.4 L324 3.2 L326 4.1 L328 2.8 L330 3.9 L332 4.0 L334 3.7 L336 3.4 L338 2.8 L340 4.1 L342 3.5 L344 4.5 L346 3.5 L348 4.8 L350 3.9 L352 4.9 L354 5.0 L356 4.4 L358 4.2 L360 4.7 L362 4.2 L364 4.9 L366 4.9 L368 4.4 L370 3.5 L372 3.9 L374 4.2 L376 4.3 L378 3.4 L380 4.5 L382 3.2 L384 3.5 L386 4.2 L388 4.5 L390 4.0 L392 4.8 L394 4.2 L396 4.9 L398 5.0 L400 5.0 L402 5.0 L404 5.0 L406 4.0 L408 5.0 L410 4.9 L412 5.0 L414 4.7 L416 3.3 L418 4.4 L420 4.2 L422 4.7 L424 3.8 L426 4.3 L428 4.6 L430 4.5 L432 4.7 L434 4.2 L436 3.8 L438 3.6 L440 3.7 L442 4.4 L444 3.3 L446 3.8 L448 5.0 L450 3.4 L452 3.6 L454 4.6 L456 3.8 L458 3.1 L460 3.4 L462 3.1 L464 3.8 L466 3.9 L468 3.9 L470 3.1 L472 3.0 L474 3.3 L476 2.8 L478 3.4 L480 3.3 L482 3.3 L482 7.9 L480 7.7 L478 8.6 L476 9.1 L474 7.8 L472 9.1 L470 9.0 L468 9.4 L466 8.5 L464 7.8 L462 8.9 L460 9.1 L458 8.9 L456 8.8 L454 8.1 L452 8.5 L450 8.1 L448 8.4 L446 8.1 L444 7.2 L442 7.5 L440 8.6 L438 8.2 L436 8.1 L434 7.6 L432 7.3 L430 8.0 L428 7.8 L426 8.3 L424 8.2 L422 8.0 L420 7.9 L418 8.8 L416 8.0 L414 8.6 L412 7.5 L410 7.4 L408 7.0 L406 7.6 L404 7.9 L402 7.0 L400 7.6 L398 7.0 L396 7.0 L394 7.6 L392 8.1 L390 8.5 L388 7.7 L386 8.5 L384 7.8 L382 7.3 L380 8.1 L378 8.2 L376 7.3 L374 7.3 L372 7.5 L370 7.6 L368 7.6 L366 7.3 L364 7.2 L362 7.3 L360 7.0 L358 8.4 L356 7.4 L354 8.4 L352 8.4 L350 8.4 L348 8.8 L346 8.0 L344 7.5 L342 8.8 L340 9.3 L338 8.2 L336 9.5 L334 8.1 L332 9.3 L330 8.3 L328 9.6 L326 9.5 L324 8.6 L322 8.1 L320 8.2 L318 7.4 L316 7.8 L314 7.7 L312 7.8 L310 8.5 L308 7.9 L306 8.7 L304 8.8 L302 7.4 L300 8.5 L298 8.9 L296 8.5 L294 7.8 L292 8.2 L290 7.7 L288 9.2 L286 7.9 L284 9.0 L282 9.0 L280 8.2 L278 8.3 L276 7.8 L274 7.6 L272 8.0 L270 7.5 L268 7.0 L266 7.4 L264 7.8 L262 7.3 L260 7.4 L258 7.3 L256 7.9 L254 7.0 L252 7.0 L250 7.8 L248 8.6 L246 8.6 L244 7.9 L242 8.8 L240 7.9 L238 8.2 L236 7.6 L234 7.4 L232 8.6 L230 8.6 L228 8.0 L226 7.0 L224 7.7 L222 7.9 L220 8.1 L218 8.1 L216 7.0 L214 7.1 L212 8.6 L210 7.7 L208 8.6 L206 8.7 L204 8.3 L202 9.0 L200 8.9 L198 9.8 L196 9.3 L194 10.1 L192 8.8 L190 8.8 L188 9.0 L186 10.0 L184 8.9 L182 9.3 L180 8.4 L178 7.9 L176 8.7 L174 9.0 L172 9.1 L170 9.4 L168 8.1 L166 9.2 L164 9.2 L162 8.6 L160 9.2 L158 9.8 L156 8.2 L154 8.4 L152 9.9 L150 8.5 L148 8.6 L146 8.3 L144 8.9 L142 9.7 L140 8.0 L138 8.2 L136 7.7 L134 8.9 L132 7.9 L130 7.4 L128 7.1 L126 7.3 L124 7.1 L122 8.2 L120 7.2 L118 8.0 L116 8.1 L114 7.0 L112 8.0 L110 8.2 L108 8.0 L106 7.8 L104 7.6 L102 8.0 L100 7.5 L98 7.3 L96 8.6 L94 7.6 L92 8.4 L90 8.3 L88 7.5 L86 8.2 L84 7.0 L82 7.9 L80 7.0 L78 7.5 L76 7.9 L74 7.3 L72 8.7 L70 8.3 L68 8.4 L66 9.1 L64 8.3 L62 8.7 L60 8.2 L58 8.8 L56 9.0 L54 8.6 L52 9.1 L50 7.9 L48 8.1 L46 9.0 L44 8.4 L42 8.5 L40 7.7 L38 8.2 L36 7.9 L34 7.5 L32 7.2 L30 7.8 L28 8.3 L26 8.8 L24 7.6 L22 8.0 L20 7.6 L18 8.3 L16 9.4 L14 8.1 L12 9.2 L10 7.8 L8 8.4 L6 8.4 L4 8.0 L2 7.4 L0 7.4 Z" fill="#5a8ccc"/><rect x="0" y="5.3" width="482" height="1.4" fill="#6e9edc"/></svg>
<div class="a" style="left:235px;top:554px;width:482px;height:2px;background:#4670b4"></div>
<div class="a" style="left:234px;top:446px;width:1px;height:133px;background:#d42424"></div>

<!-- ================= OVERLAY ================= -->
<svg style="left:0;top:0" width="750" height="579" viewBox="0 0 750 579">
 <g font-family="Liberation Sans, sans-serif" font-weight="bold" font-size="24" letter-spacing="2" text-anchor="middle" stroke-linejoin="round">
  <g fill="none" stroke="#707070" stroke-width="4.8"><text x="474.5" y="211.5">タイムラインへ</text><text x="474" y="251.5">ドラッグ＆ドロップ</text></g>
  <g fill="none" stroke="#f2f2f2" stroke-width="3.6"><text x="474.5" y="211.5">タイムラインへ</text><text x="474" y="251.5">ドラッグ＆ドロップ</text></g>
  <g fill="#1f1f1f" stroke="#1f1f1f" stroke-width="0.7"><text x="474.5" y="211.5">タイムラインへ</text><text x="474" y="251.5">ドラッグ＆ドロップ</text></g>
 </g>
 <path d="M337 231.5 L338.8 232 L391.3 417.5 L399.9 412.3 L392.7 439.8 L371.9 420.6 L381.3 420 Z" fill="#ff0a0a"/>
</svg>
</body></html>
